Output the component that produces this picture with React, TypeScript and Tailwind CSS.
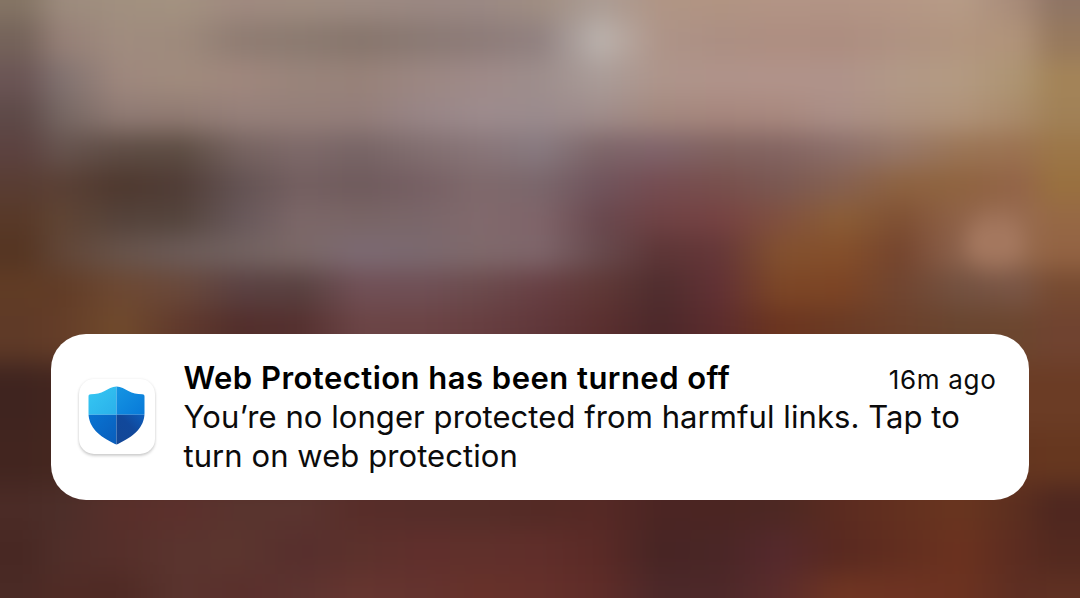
import React from "react";

type Band = { y: number; colors: string };

// Colour bands of the blurred wallpaper, one sample every 60px from left to right.
const BANDS: Band[] = [
  { y: 0, colors: "857565 9c8b7d a1907f a39280 a08a80 9f8c80 9d8b82 9b8882 9b8984 a08e82 ab9c94 b09585 b19482 b29485 b29485 b59785 b69b86 a78a78 8f7565" },
  { y: 40, colors: "75635a 957f76 a08c7f 9e8a7c 8f7c72 8b7a70 87756c 8a7973 8d7b78 918180 bbb2ad ae9488 ac8f83 ae8e81 ad8d80 af9282 b2957f b09379 97795d" },
  { y: 80, colors: "6b5555 80716f 9e877d a08b7d a0877d 99847b 988279 9c8782 9f8a88 9e8e8c aa9c98 ae958b b0938a b1938a b0938a b29987 b39a82 ad9471 a48458" },
  { y: 115, colors: "5e4a48 756662 907b74 917b73 96807a 957f79 947e7a 988586 9d8b8d 9b8b8d a08d8b a4897f a7877e a9897f ab8f87 ad9280 b0937a a98a69 a18157" },
  { y: 150, colors: "5c4240 66534e 5e4c44 5c4c42 75625f 7d6969 776465 816e6f 887578 87797f 7d6568 7f636a 80625f 836461 8b6e69 967768 9a7455 9b7250 9c7648" },
  { y: 185, colors: "593d33 5a4035 4e382e 503c36 635252 745f60 6f5a5c 765f63 7f696b 7a666b 70545c 754c51 784f4c 7a5852 856050 8d6240 8f633f 936448 99703f" },
  { y: 220, colors: "583928 5f4433 54423a 54443c 675759 7c6768 796565 7a6669 81696c 7f6469 69484e 6f4244 764242 80503f 8b5d36 7f5033 8f6248 986b50 966845" },
  { y: 250, colors: "553522 614536 67534a 6c5b58 726260 7b6867 7c6a73 7b696f 7f696b 7e656a 674a4d 5d3536 653738 82502f 854f2a 75452e 8d634d 976c50 936343" },
  { y: 290, colors: "613c25 613c26 6d4832 69483a 5a4041 58403f 704f55 6f4f55 6b4a4c 673f43 5f3836 4f2d2e 623134 7c4626 7c4424 704530 735140 795545 774b31" },
  { y: 325, colors: "5f3a27 643d28 704a2c 60392c 522e2b 55302f 6b4445 6b4344 673e40 60373a 5a2f2f 4c282a 5c2c2d 6b341f 6a3a24 6b402b 69452f 6c462f 704330" },
  { y: 400, colors: "3f241f 43261f 4a2a22 4a2a24 4a2a24 4c2a26 5a3633 5a3633 583432 523030 4e2a2a 48262a 502828 5c2e20 5e3220 64361f 683820 6b3c25 6b3c25" },
  { y: 460, colors: "42251f 45271f 4a2a24 4c2c26 4c2c26 4f2e28 522e28 522c28 502a26 502826 502826 482422 482422 4c2822 582a20 602e1f 66331f 65351f 66371f" },
  { y: 510, colors: "4b2b26 4c2e29 582f2a 5c302c 59342e 5a342f 582d29 562d29 552d28 542a25 562925 4b2523 4b2522 4d2823 5b2b20 63301f 69351f 5b2e1f 4e271f" },
  { y: 550, colors: "482823 4f2e29 562f2a 5a342e 5b352e 572f2d 5c312c 602f2c 60302b 602e2a 5a2a26 472524 4a2626 55292c 592920 622e1f 6b321f 5b2c20 53291f" },
  { y: 598, colors: "4a2a25 502b25 4f2a24 5a342e 5a2f2c 5c332f 66352f 64332e 67312a 65302a 5f2c28 4c2829 4d2829 5b2c2b 6f3522 6e3322 6c3220 5d2e22 5f3022" },
];

// The outermost samples sit inside the screen edges, where the wallpaper turns darker.
const stopX = (index: number) => (index === 0 ? 24 : index === 18 ? 1054 : index * 60);

function Wallpaper() {
  return (
    <svg className="absolute inset-0 h-full w-full" viewBox="0 0 1080 598" preserveAspectRatio="none" aria-hidden="true">
      <defs>
        <filter id="soften" filterUnits="userSpaceOnUse" x="-60" y="-60" width="1200" height="720" colorInterpolationFilters="sRGB">
          <feGaussianBlur stdDeviation="9 13" />
        </filter>
        {BANDS.map((band, i) => (
          <linearGradient key={band.y} id={`band-${i}`} gradientUnits="userSpaceOnUse" x1="0" y1="0" x2="1080" y2="0">
            {band.colors.split(" ").map((color, j) => (
              <stop key={j} offset={stopX(j) / 1080} stopColor={`#${color}`} />
            ))}
          </linearGradient>
        ))}
      </defs>
      <g filter="url(#soften)">
        {BANDS.map((band, i) => {
          const top = i === 0 ? -60 : (BANDS[i - 1].y + band.y) / 2;
          return <rect key={band.y} x="-60" y={top} width="1200" height={660 - top} fill={`url(#band-${i})`} />;
        })}
        <ellipse cx="995" cy="243" rx="30" ry="28" fill="#a5785f" />
      </g>
    </svg>
  );
}

function ShieldIcon() {
  return (
    <svg className="h-[59px] w-[57px]" viewBox="0 0 57 59" aria-hidden="true">
      <defs>
        <clipPath id="shield">
          <path d="M28.5 .4C33 .5 36.6 2.6 40.4 5.1C44.5 7.6 49 8.3 54.2 8.3C55.8 8.3 56.5 9 56.5 10.4V27C56.5 41.5 45.5 50.5 30 58Q28.5 58.8 27 58C11.5 50.5.5 41.5.5 27V10.4C.5 9 1.2 8.3 2.8 8.3C8 8.3 12.5 7.6 16.6 5.1C20.4 2.6 24 .5 28.5.4Z" />
        </clipPath>
        <linearGradient id="tl" x1="0" y1="0" x2="1" y2="1">
          <stop stopColor="#36c8f3" /><stop offset="1" stopColor="#2ab0ea" />
        </linearGradient>
        <linearGradient id="tr" x1="0" y1="0" x2="1" y2="1">
          <stop stopColor="#1595e3" /><stop offset="1" stopColor="#0879d8" />
        </linearGradient>
        <linearGradient id="bl" x1="0" y1="0" x2="1" y2="1">
          <stop stopColor="#0874d2" /><stop offset="1" stopColor="#0a5dbb" />
        </linearGradient>
        <linearGradient id="br" x1="1" y1="0" x2="0" y2="1">
          <stop stopColor="#0d5fbd" /><stop offset=".45" stopColor="#11489b" /><stop offset="1" stopColor="#134796" />
        </linearGradient>
      </defs>
      <g clipPath="url(#shield)">
        <path fill="url(#tl)" d="M0 0H28.5V28.7H0Z" />
        <path fill="url(#tr)" d="M28.5 0H57V28.7H28.5Z" />
        <path fill="url(#bl)" d="M0 28.7H28.5V59H0Z" />
        <path fill="url(#br)" d="M28.5 28.7H57V59H28.5Z" />
      </g>
    </svg>
  );
}

export default function App() {
  return (
    <main className="relative flex h-[598px] w-[1080px] flex-col overflow-hidden bg-[#5a342e] font-['Inter','Liberation_Sans',sans-serif] text-[#0b0b0b]">
      <Wallpaper />
      <article className="relative mx-[51px] mt-[334px] flex h-[165.5px] items-start rounded-[35px] bg-white pl-7">
        <div className="mt-[45px] flex h-[75px] w-[76px] shrink-0 justify-center rounded-[15px] bg-white pr-[1.5px] pt-[7px] shadow-[0_2px_3px_rgba(0,0,0,0.18),0_0_3px_rgba(0,0,0,0.07)]">
          <ShieldIcon />
        </div>
        <div className="ml-[28.5px] mt-6 flex w-[813px] flex-col">
          <header className="flex h-[39px] items-baseline justify-between whitespace-nowrap leading-[39px]">
            <h1 className="text-[31px] font-semibold tracking-[0.47px] text-black">Web Protection has been turned off</h1>
            <time className="text-[26px] tracking-[0.7px]">16m ago</time>
          </header>
          <p className="whitespace-nowrap text-[31px] leading-[39px] tracking-[0.07px]">
            You’re no longer protected from harmful links. Tap to
            <br />
            turn on web protection
          </p>
        </div>
      </article>
    </main>
  );
}
